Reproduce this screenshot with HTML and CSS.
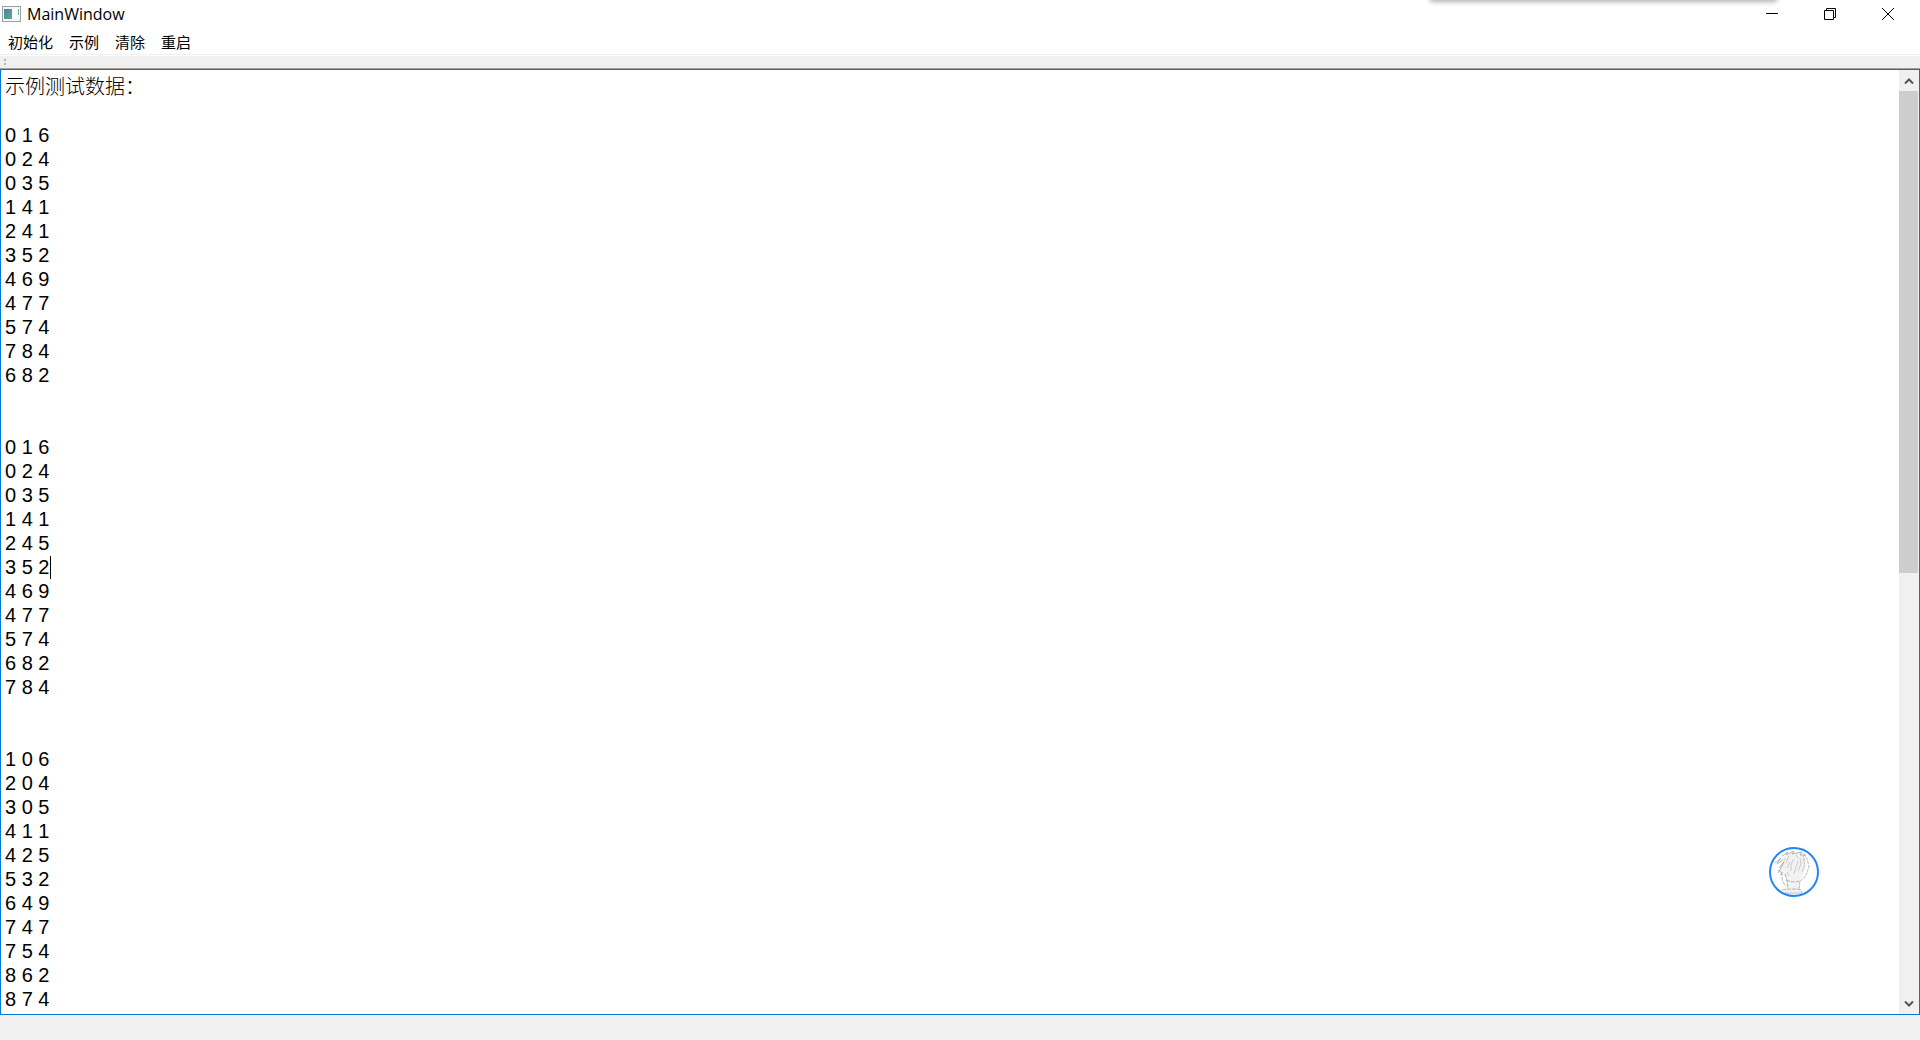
FILE: index.html
```html
<!DOCTYPE html>
<html lang="zh-CN">
<head>
  <meta charset="UTF-8">
  <meta name="viewport" content="width=device-width, initial-scale=1.0">
  <title>MainWindow</title>
  <link rel="stylesheet" href="styles.css">
</head>
<body>
  <div class="window">
    <header class="titlebar">
      <svg class="app-icon" width="19" height="16" viewBox="0 0 19 16">
        <defs>
          <linearGradient id="pane" x1="0" y1="0" x2="1" y2="1">
            <stop offset="0" stop-color="#4a7fa8"/>
            <stop offset="1" stop-color="#5fae78"/>
          </linearGradient>
        </defs>
        <rect x="0.5" y="0.5" width="18" height="15" fill="#f4f6f7" stroke="#9aa2a8"/>
        <rect x="2" y="3" width="8" height="10" fill="url(#pane)"/>
        <rect x="11" y="3" width="4" height="10" fill="#ffffff"/>
        <rect x="16" y="3" width="1" height="6" fill="#6fb3a0"/>
      </svg>
      <h1 class="title">MainWindow</h1>
      <div class="window-controls">
        <button class="control" aria-label="Minimize">
          <svg width="12" height="12" viewBox="0 0 12 12"><path d="M0 5.5H12"/></svg>
        </button>
        <button class="control" aria-label="Restore">
          <svg width="12" height="12" viewBox="0 0 12 12"><path d="M0.5 2.5H9.5V11.5H0.5ZM2.5 2.5V0.5H11.5V9.5H9.5"/></svg>
        </button>
        <button class="control" aria-label="Close">
          <svg width="12" height="12" viewBox="0 0 12 12"><path d="M0 0L12 12M12 0L0 12"/></svg>
        </button>
      </div>
    </header>

    <nav class="menubar">
      <button class="menu">初始化</button>
      <button class="menu">示例</button>
      <button class="menu">清除</button>
      <button class="menu">重启</button>
    </nav>

    <div class="toolbar"><span class="grip"></span></div>

    <main class="editor">
      <textarea class="text" aria-label="Text" spellcheck="false">示例测试数据：

0 1 6
0 2 4
0 3 5
1 4 1
2 4 1
3 5 2
4 6 9
4 7 7
5 7 4
7 8 4
6 8 2


0 1 6
0 2 4
0 3 5
1 4 1
2 4 5
3 5 2
4 6 9
4 7 7
5 7 4
6 8 2
7 8 4


1 0 6
2 0 4
3 0 5
4 1 1
4 2 5
5 3 2
6 4 9
7 4 7
7 5 4
8 6 2
8 7 4</textarea>
      <span class="caret"></span>
      <div class="scrollbar">
        <button class="arrow" aria-label="Scroll up">
          <svg width="10" height="8" viewBox="0 0 10 8"><path d="M1 6.5L5 2.5L9 6.5"/></svg>
        </button>
        <div class="track"><div class="thumb"></div></div>
        <button class="arrow" aria-label="Scroll down">
          <svg width="10" height="8" viewBox="0 0 10 8"><path d="M1 1.5L5 5.5L9 1.5"/></svg>
        </button>
      </div>
    </main>

    <footer class="statusbar"></footer>
  </div>

  <div class="top-shadow"></div>

  <button class="float-ball" aria-label="Assistant">
    <svg width="50" height="50" viewBox="0 0 50 50">
      <defs><clipPath id="ball"><circle cx="25" cy="25" r="23"/></clipPath></defs>
      <circle cx="25" cy="25" r="24" fill="#ffffff"/>
      <g clip-path="url(#ball)" fill="none" stroke="#a4a4a4" stroke-width="0.8">
        <path fill="#f2f2f2" stroke="none" d="M13 12Q22 3 35 6L36 20Q34 30 30 34L31 42L33 50H14L18 33L11 24Z"/>
        <path d="M6 16L12 11L8 17L14 13M10 21L15 15L11 23L9 26M9 23L13 26L11 28M13 9L19 5L17 8L25 4L23 7L33 5L31 8L37 8"/>
        <path stroke-dasharray="3 1" d="M35 7L38 12L40 19L38 26L35 31L31 34L30 42"/>
        <path stroke-dasharray="4 1" d="M13 25L13 32L16 39M16 27L18 33L19 42M17 33Q24 36 31 34M13 43Q24 41 32 43L34 50"/>
        <path stroke="#c0c0c0" d="M17 16L20 9M18 21L21 15M22 24L22 17L25 12M25 27L27 20L29 14M29 24L32 17L31 11M34 12L36 18L33 25M20 29L18 25M27 8L29 11M34 8L36 14M15 14L17 11M12 46H32"/>
      </g>
      <circle cx="25" cy="25" r="24" fill="none" stroke="#2486f8" stroke-width="2"/>
    </svg>
  </button>
</body>
</html>
```
FILE: styles.css
```css
* {
  box-sizing: border-box;
}

body {
  margin: 0;
  font-family: 'Open Sans', 'Noto Sans CJK SC', sans-serif;
  font-size: 15px;
  color: #000;
  overflow: hidden;
}

button {
  border: none;
  padding: 0;
  background: none;
  font: inherit;
  color: inherit;
}

.window {
  display: flex;
  flex-direction: column;
  height: 100vh;
  background-color: #fff;
}

/* Title bar */
.titlebar {
  display: flex;
  align-items: center;
  height: 28px;
  padding: 0 3px 0 2px;
}

.title {
  margin: 0 0 0 6px;
  font-size: 16px;
  font-weight: 400;
  line-height: 28px;
}

.window-controls {
  display: flex;
  margin-left: auto;
}

.control {
  display: flex;
  align-items: center;
  justify-content: center;
  width: 58px;
  height: 28px;
}

.control svg {
  fill: none;
  stroke: #000;
}

/* Menu bar */
.menubar {
  display: flex;
  height: 27px;
  border-bottom: 1px solid #f0f0f0;
}

.menu {
  height: 28px;
  padding: 0 8px;
  line-height: 28px;
}

/* Tool bar */
.toolbar {
  height: 13px;
  margin-top: 1px;
  padding: 3px 4px;
  background-color: #f0f0f0;
  border-bottom: 1px solid #a0a0a0;
}

.grip {
  display: block;
  width: 2px;
  height: 6px;
  border-top: 2px solid #b4b4b4;
  border-bottom: 2px solid #b4b4b4;
}

/* Editor */
.editor {
  position: relative;
  display: flex;
  flex: 1;
  min-height: 0;
  border: 1px solid #0078d7;
}

.text {
  flex: 1;
  padding: 5px 4px 0;
  border: none;
  outline: none;
  resize: none;
  overflow: hidden;
  background-color: #fff;
  color: #000;
  font-family: 'Liberation Sans', 'Noto Sans CJK SC', sans-serif;
  font-size: 20px;
  font-weight: 300;
  line-height: 24px;
}

.caret {
  position: absolute;
  left: 49px;
  top: 486px;
  width: 1px;
  height: 23px;
  background-color: #000;
}

.scrollbar {
  display: flex;
  flex-direction: column;
  width: 20px;
  padding-right: 1px;
  background-color: #f0f0f0;
}

.arrow {
  display: flex;
  align-items: center;
  justify-content: center;
  height: 21px;
}

.arrow svg {
  fill: none;
  stroke: #555;
  stroke-width: 2;
}

.track {
  flex: 1;
}

.thumb {
  height: 53.4%;
  background-color: #cdcdcd;
}

/* Status bar */
.statusbar {
  height: 25px;
  background-color: #f0f0f0;
}

/* Overlays */
.top-shadow {
  position: absolute;
  top: -4px;
  right: 145px;
  width: 343px;
  height: 4px;
  box-shadow: 0 0 5px 2px rgba(0, 0, 0, 0.3);
}

.float-ball {
  position: absolute;
  right: 101px;
  bottom: 143px;
  width: 50px;
  height: 50px;
}
```
